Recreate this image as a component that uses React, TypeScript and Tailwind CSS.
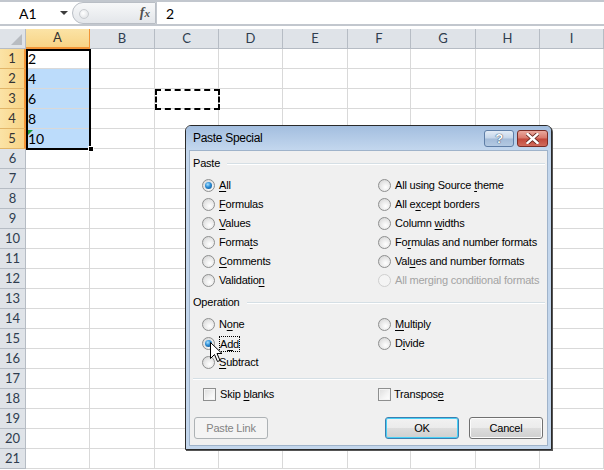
import React from 'react';

const COLS = ['A', 'B', 'C', 'D', 'E', 'F', 'G', 'H', 'I'];
const ROWS = Array.from({ length: 21 }, (_, i) => i + 1);
const VALUES: Record<number, string> = { 1: '2', 2: '4', 3: '6', 4: '8', 5: '10' };

const Radio = ({ checked = false, disabled = false }: { checked?: boolean; disabled?: boolean }) => (
  <span
    className={`relative inline-flex h-[13px] w-[13px] shrink-0 items-center justify-center rounded-full border ${
      disabled
        ? 'border-[#cfcfcf] bg-[#f4f4f4]'
        : 'border-[#8e8f8f] bg-[radial-gradient(circle_at_60%_65%,#ffffff_0%,#e6e6e6_55%,#cdcdcd_100%)]'
    }`}
  >
    {checked && (
      <span className="h-[7px] w-[7px] rounded-full bg-[radial-gradient(circle_at_40%_35%,#a8e2ff_0%,#2a8ad4_45%,#0b4d82_100%)]" />
    )}
  </span>
);

const Check = () => (
  <span className="inline-block h-[13px] w-[13px] shrink-0 border border-[#8e8f8f] bg-[linear-gradient(135deg,#dcdcdc_0%,#f4f4f4_60%,#ffffff_100%)] shadow-[inset_0_0_0_1px_#f4f4f4]" />
);

// label with one underlined access key
const Lbl = ({ t, k, dim = false }: { t: string; k?: number; dim?: boolean }) => (
  <span className={`whitespace-nowrap ${dim ? 'text-[#a3a3a3]' : 'text-black'}`}>
    {k === undefined ? (
      t
    ) : (
      <>
        {t.slice(0, k)}
        <span className="underline underline-offset-2">{t[k]}</span>
        {t.slice(k + 1)}
      </>
    )}
  </span>
);

const Opt = ({ t, k, checked, disabled, focus }: { t: string; k?: number; checked?: boolean; disabled?: boolean; focus?: boolean }) => (
  <div className="flex h-[19px] items-center gap-[4px]">
    <Radio checked={checked} disabled={disabled} />
    <span className={focus ? 'border border-dotted border-black leading-[14px]' : ''}>
      <Lbl t={t} k={k} dim={disabled} />
    </span>
  </div>
);

const Section = ({ title }: { title: string }) => (
  <div className="flex h-[19px] items-center">
    <span>{title}</span>
    <div className="ml-[7px] h-[2px] flex-1 border-t border-b border-t-[#d5dfe5] border-b-white" />
  </div>
);

const Btn = ({ children, variant }: { children: React.ReactNode; variant: 'disabled' | 'default' | 'normal' }) => {
  const cls =
    variant === 'disabled'
      ? 'border-[#adb2b5] bg-[#f4f4f4] text-[#838383]'
      : variant === 'default'
        ? 'border-[#3c7fb1] bg-[linear-gradient(#f2f2f2_0%,#ebebeb_50%,#dddddd_51%,#cfcfcf_100%)] shadow-[inset_0_0_0_1px_#48d0f6]'
        : 'border-[#707070] bg-[linear-gradient(#f2f2f2_0%,#ebebeb_50%,#dddddd_51%,#cfcfcf_100%)] shadow-[inset_0_0_0_1px_#fcfcfc]';
  return (
    <div className={`flex h-[22px] w-[74px] items-center justify-center rounded-[3px] border ${cls}`}>{children}</div>
  );
};

export default function App() {
  return (
    <div className="relative h-[470px] w-[604px] overflow-hidden bg-white font-['Lato',sans-serif]">
      {/* formula bar */}
      <div className="h-[29px] bg-white">
        <div className="flex h-[26px] border-t-2 border-b-2 border-[#c2c7ce]">
          <div className="relative flex w-[72px] items-center pl-[19px] text-[14px] text-black">
            A1
            <span className="absolute left-[60px] top-[9px] h-0 w-0 border-l-[4px] border-r-[4px] border-t-[4px] border-l-transparent border-r-transparent border-t-[#3c3c3c]" />
          </div>
          <div className="relative flex w-[84px] items-center justify-end rounded-l-full border border-[#b9bec5] bg-[linear-gradient(#f7f8f9,#e3e6ea)] pr-[5px]">
            <span className="absolute left-[6px] top-[6px] h-[10px] w-[10px] rounded-full border border-[#c9ccd0] bg-[radial-gradient(circle_at_40%_40%,#ffffff,#d9dce0)]" />
            <span className="font-['Liberation_Serif',serif] text-[14px] font-bold italic leading-none text-[#505050]">
              f<span className="text-[11px]">x</span>
            </span>
          </div>
          <div className="flex flex-1 items-center border-l border-[#c2c7ce] pl-[9px] text-[14px] text-black">2</div>
        </div>
      </div>

      {/* grid */}
      <div className="grid grid-cols-[26px_64px_65px_64px_64px_65px_63px_65px_64px_64px] text-[13px]">
        <div className="relative h-[20px] border-r border-b border-[#b6bcc4] bg-[#dfe3e8]">
          <span className="absolute bottom-[3px] right-[3px] h-0 w-0 border-b-[11px] border-l-[11px] border-b-[#b8bcc1] border-l-transparent" />
        </div>
        {COLS.map((c) => (
          <div
            key={c}
            className={`flex h-[20px] items-center justify-center border-r text-[13px] ${
              c === 'A'
                ? 'border-b-2 border-r-[#f29436] border-b-[#f29436] bg-[linear-gradient(#fbe3a6,#f8d486)] text-[#333]'
                : 'border-b border-[#b6bcc4] bg-[#dfe3e8] text-[#2f3d4f]'
            }`}
          >
            {c}
          </div>
        ))}
        {ROWS.map((r) => (
          <React.Fragment key={r}>
            <div
              className={`flex h-[20px] items-center justify-center border-b text-[13px] ${
                r <= 5
                  ? 'border-r-2 border-r-[#f29436] border-b-[#e2b568] bg-[linear-gradient(90deg,#fbe3a6,#f8d486)] text-[#333]'
                  : 'border-r border-[#b6bcc4] bg-[#dfe3e8] text-[#2f3d4f]'
              }`}
            >
              {r}
            </div>
            {COLS.map((c) => (
              <div
                key={c}
                className={`flex h-[20px] items-end border-r border-b border-[#d9d9d9] pl-[2px] text-[14px] leading-[18px] text-black ${
                  c === 'A' && r >= 2 && r <= 5 ? 'bg-[#bcdcfb]' : ''
                }`}
              >
                {c === 'A' ? VALUES[r] : ''}
              </div>
            ))}
          </React.Fragment>
        ))}
      </div>

      {/* selection border + fill handle */}
      <div className="absolute left-[26px] top-[49px] h-[101px] w-[65px] border-2 border-black" />
      <div className="absolute left-[88px] top-[146px] h-[6px] w-[6px] border border-white bg-black" />
      <div className="absolute left-[28px] top-[130px] h-0 w-0 border-r-[5px] border-t-[5px] border-r-transparent border-t-[#1e9b3a]" />
      {/* copy marquee */}
      <div className="absolute left-[155px] top-[89px] h-[21px] w-[65px] border-2 border-dashed border-black" />

      {/* Paste Special dialog */}
      <div className="absolute left-[185px] top-[125px] flex h-[325px] w-[367px] flex-col rounded-t-[6px] border border-[#2a2a2a] bg-[#c3d6ec] font-['Liberation_Sans',sans-serif] text-[11px] tracking-[-0.2px] shadow-[1px_1px_0_#555]">
        <div className="flex h-[24px] shrink-0 items-center rounded-t-[5px] bg-[linear-gradient(#a3bedf,#c3d7ee)] pl-[7px] pr-[3px]">
          <span className="text-[12px] tracking-[-0.3px] text-black">Paste Special</span>
          <div className="ml-auto flex gap-[3px] self-start pt-[4px]">
            <div className="flex h-[17px] w-[30px] items-center justify-center rounded-[3px] border border-[#5f7ea6] bg-[linear-gradient(#e3ecf6_0%,#c4d5e9_48%,#a3bbd8_52%,#b3c9e2_100%)] text-[13px] font-bold leading-none text-white [text-shadow:0_0_1px_#243b5a,0_0_1px_#243b5a]">
              ?
            </div>
            <div className="flex h-[17px] w-[31px] items-center justify-center rounded-[3px] border border-[#7a2c26] bg-[linear-gradient(#eaa99e_0%,#d9776a_48%,#c2473a_52%,#d06b5c_100%)]">
              <svg width="13" height="11" viewBox="0 0 13 11">
                <path d="M1.5 1 L11.5 10 M11.5 1 L1.5 10" stroke="#5c1d17" strokeWidth="4" strokeLinecap="square" />
                <path d="M1.5 1 L11.5 10 M11.5 1 L1.5 10" stroke="#ffffff" strokeWidth="2.4" strokeLinecap="square" />
              </svg>
            </div>
          </div>
        </div>
        <div className="mx-[3px] mb-[3px] flex flex-1 flex-col border border-[#9fb3ca] bg-[#f0f0f0] pl-[3px] pr-[2px] pt-[3px]">
          <Section title="Paste" />
          <div className="ml-[9px] mt-[3px] grid grid-cols-[176px_1fr]">
            <Opt t="All" k={0} checked />
            <Opt t="All using Source theme" k={17} />
            <Opt t="Formulas" k={0} />
            <Opt t="All except borders" k={5} />
            <Opt t="Values" k={0} />
            <Opt t="Column widths" k={7} />
            <Opt t="Formats" k={5} />
            <Opt t="Formulas and number formats" k={2} />
            <Opt t="Comments" k={0} />
            <Opt t="Values and number formats" k={3} />
            <Opt t="Validation" k={9} />
            <Opt t="All merging conditional formats" disabled />
          </div>
          <div className="mt-[3px]">
            <Section title="Operation" />
          </div>
          <div className="ml-[9px] mt-[3px] grid grid-cols-[176px_1fr]">
            <Opt t="None" k={1} />
            <Opt t="Multiply" k={0} />
            <Opt t="Add" k={1} checked focus />
            <Opt t="Divide" k={1} />
            <Opt t="Subtract" k={0} />
            <div />
          </div>
          <div className="mr-[1px] mt-[6px] h-[2px] border-t border-b border-t-[#d5dfe5] border-b-white" />
          <div className="ml-[10px] mt-[5px] grid grid-cols-[175px_1fr]">
            <div className="flex h-[19px] items-center gap-[4px]">
              <Check />
              <Lbl t="Skip blanks" k={5} />
            </div>
            <div className="flex h-[19px] items-center gap-[3px]">
              <Check />
              <Lbl t="Transpose" k={8} />
            </div>
          </div>
          <div className="mt-[13px] flex pr-[2px]">
            <div className="ml-[1px]">
              <Btn variant="disabled">Paste Link</Btn>
            </div>
            <div className="ml-auto flex gap-[10px]">
              <Btn variant="default">OK</Btn>
              <Btn variant="normal">Cancel</Btn>
            </div>
          </div>
        </div>
      </div>

      {/* mouse cursor */}
      <svg className="absolute left-[210px] top-[342px]" width="13" height="21" viewBox="0 0 13 21">
        <path d="M0.5 0.5 L0.5 16.5 L4.5 12.5 L7.5 19.5 L10 18.5 L7 11.5 L12 11.5 Z" fill="#fff" stroke="#000" strokeWidth="1" />
      </svg>
    </div>
  );
}
